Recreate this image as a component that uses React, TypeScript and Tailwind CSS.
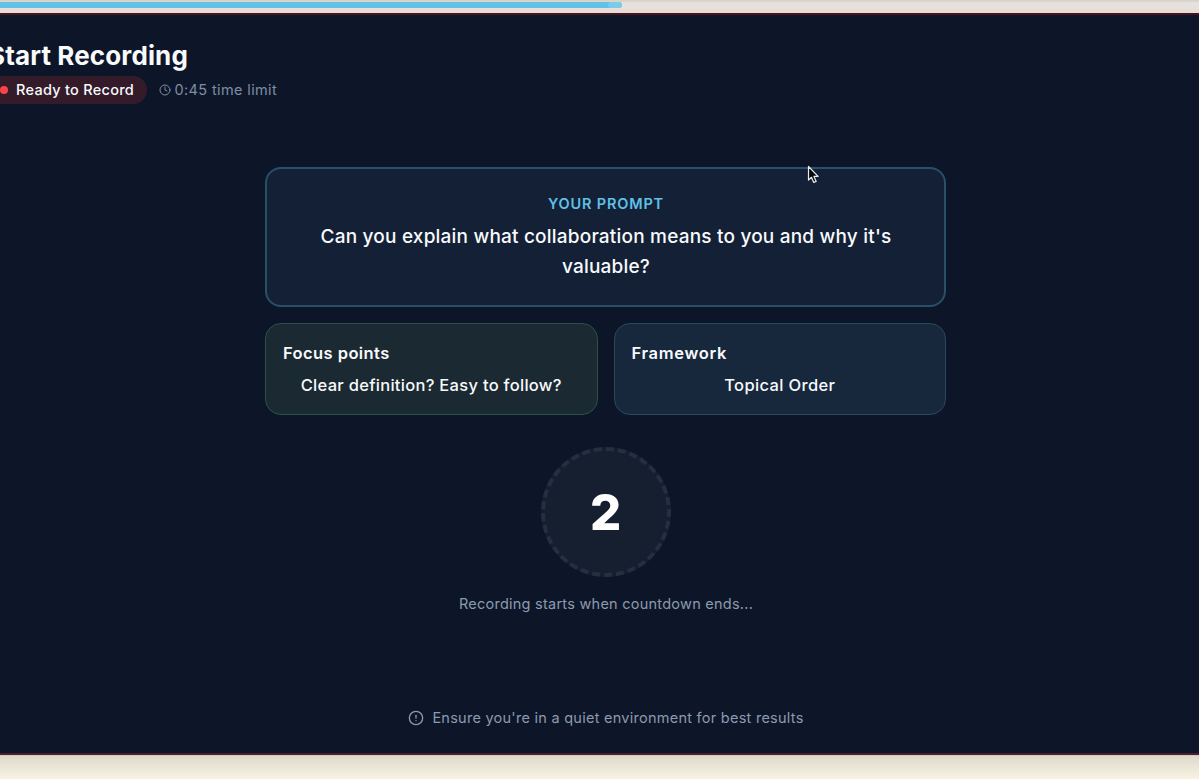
import React from "react";
import { AlertCircle, Clock } from "lucide-react";

const ProgressBar: React.FC = () => {
  return (
    <div className="h-[13px] shrink-0 bg-gradient-to-b from-[#d6d3c5] via-[#e8e0de] to-[#e9dad4] pt-[2px]">
      <div className="flex h-[6px] w-full bg-[#e7e1dd]">
        <div className="flex w-[622px] justify-end overflow-hidden rounded-r-full bg-[#62c1e9]">
          <div className="w-[14px] rounded-full bg-[#7accea]" />
        </div>
      </div>
    </div>
  );
};

const Header: React.FC = () => {
  return (
    <div className="-ml-[12px] flex h-[90px] shrink-0 flex-col items-start pt-[25px]">
      <h1 className="text-[26px] leading-[32px] font-bold tracking-[0.13px] whitespace-nowrap text-[#f8fafc]">
        Start Recording
      </h1>
      <div className="mt-1 flex items-center gap-3">
        <div className="flex h-7 w-[158.5px] items-center gap-2 rounded-full bg-[#341b2a] pl-[12px] text-[14.5px] font-medium tracking-[0.28px] whitespace-nowrap text-[#f8fafc]">
          <span className="h-2 w-2 shrink-0 rounded-full bg-[#fb4349]" />
          <span>Ready to Record</span>
        </div>
        <div className="flex items-center gap-1 text-[14.5px] tracking-[0.37px] whitespace-nowrap text-[#7e8da3]">
          <Clock size={12} strokeWidth={2} />
          <span>0:45 time limit</span>
        </div>
      </div>
    </div>
  );
};

const Cursor: React.FC = () => {
  return (
    <svg
      className="absolute top-[-4px] left-[540px]"
      width="13"
      height="20"
      viewBox="0 0 13 20"
    >
      <path
        d="M1.5 1.5v13.6l3-2.8 2.2 5.1 2.5-1-2.2-5h4.1z"
        fill="#05080c"
        stroke="#e8ecee"
        strokeWidth="1.2"
        strokeLinejoin="round"
      />
    </svg>
  );
};

const App: React.FC = () => {
  return (
    <div className="flex h-[779px] w-full flex-col overflow-hidden bg-[#f5f0e1] font-['Inter',sans-serif]">
      <ProgressBar />
      <main className="flex h-[742px] shrink-0 flex-col border-t-2 border-b-2 border-t-[#43151f] border-b-[#43232e] bg-[#0d1628]">
        <Header />

        <section className="mt-[62px] ml-[265px] flex w-[681px] flex-col items-center">
          <div className="relative flex h-[140px] w-full flex-col items-center rounded-[16px] border-2 border-[#285069] bg-[#142036] pt-[25px] text-center">
            <p className="pl-px text-[14.5px] leading-5 font-semibold tracking-[0.82px] text-[#5fc1e6]">
              YOUR PROMPT
            </p>
            <p className="mt-[8px] w-[600px] pl-px text-[19px] leading-[29.5px] font-medium tracking-[0.2px] text-[#f8fafc]">
              Can you explain what collaboration means to you and why it's
              valuable?
            </p>
            <Cursor />
          </div>

          <div className="mt-4 grid w-full grid-cols-2 gap-4">
            <div className="h-[92px] rounded-[16px] border border-[#2c5148] bg-[#1b2932] px-4 pt-4 text-[#f8fafc]">
              <h2 className="pl-px text-[16.5px] leading-[26px] font-semibold tracking-[0.42px]">
                Focus points
              </h2>
              <p className="mt-[6px] text-center text-[16.5px] leading-[26px] font-medium tracking-[0.29px] whitespace-nowrap">
                Clear definition? Easy to follow?
              </p>
            </div>
            <div className="h-[92px] rounded-[16px] border border-[#28485f] bg-[#17283d] px-4 pt-4 text-[#f8fafc]">
              <h2 className="pl-px text-[16.5px] leading-[26px] font-semibold tracking-[0.7px]">
                Framework
              </h2>
              <p className="mt-[6px] text-center text-[16.5px] leading-[26px] font-medium tracking-[0.35px]">
                Topical Order
              </p>
            </div>
          </div>

          <div className="mt-8 flex h-[130px] w-[130px] items-center justify-center rounded-full border-4 border-dashed border-[#252f40] bg-[#161f30]">
            <span className="text-[49px] leading-none font-extrabold text-white">
              2
            </span>
          </div>
          <p className="mt-4 pl-px text-[14.5px] leading-[22px] tracking-[0.25px] whitespace-nowrap text-[#8c9aae]">
            Recording starts when countdown ends...
          </p>
        </section>

        <footer className="mt-[91px] ml-[265px] flex w-[681px] items-center justify-center gap-2 pl-px text-[14.5px] leading-[24px] tracking-[0.26px] whitespace-nowrap text-[#8c9aae]">
          <AlertCircle size={16} strokeWidth={2} />
          <span>Ensure you're in a quiet environment for best results</span>
        </footer>
      </main>
      <div className="flex-1 border-t border-[#e9bfc2] bg-gradient-to-b from-[#dedacb] to-[#f8f2e2]" />
    </div>
  );
};

export default App;
